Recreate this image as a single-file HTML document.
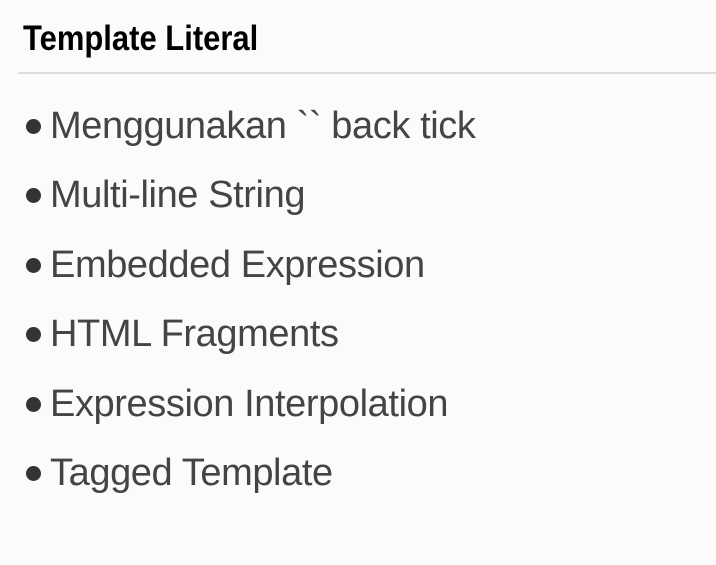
<!DOCTYPE html>
<html><head><style>
html,body{margin:0;padding:0;background:#fbfbfb;width:716px;height:565px;overflow:hidden}
.t{position:absolute;left:23px;top:19px;font:bold 35px "Liberation Sans",sans-serif;color:#000;transform:scaleX(0.885);transform-origin:left;white-space:nowrap}
.hr{position:absolute;left:18px;top:72px;width:698px;height:2px;background:#dcdcdc}
.i{position:absolute;left:50px;font:38px "Liberation Sans",sans-serif;color:#444;white-space:nowrap;line-height:1;letter-spacing:-0.4px}
.d{position:absolute;left:26px;width:15px;height:15px;border-radius:50%;background:#333}
</style></head><body>
<div class="t">Template Literal</div>
<div class="hr"></div>
<div class="d" style="top:119px"></div><div class="i" style="top:107px">Menggunakan `` back tick</div>
<div class="d" style="top:188px"></div><div class="i" style="top:176px">Multi-line String</div>
<div class="d" style="top:258px"></div><div class="i" style="top:246px">Embedded Expression</div>
<div class="d" style="top:327px"></div><div class="i" style="top:315px">HTML Fragments</div>
<div class="d" style="top:397px"></div><div class="i" style="top:385px">Expression Interpolation</div>
<div class="d" style="top:466px"></div><div class="i" style="top:454px">Tagged Template</div>
</body></html>
